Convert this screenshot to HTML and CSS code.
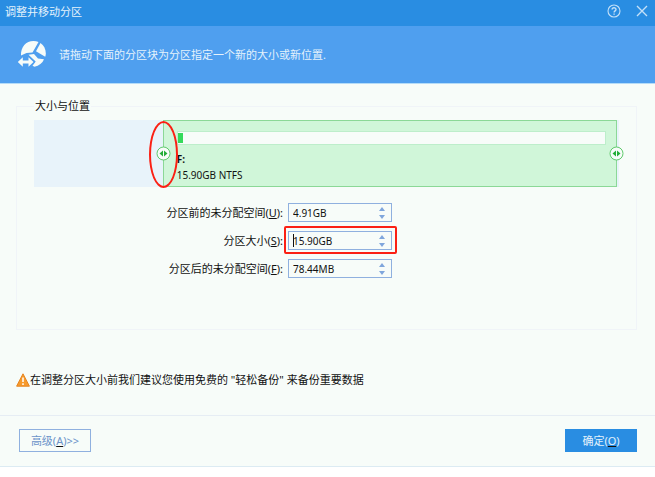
FILE: index.html
```html
<!DOCTYPE html>
<html lang="zh-CN">
<head>
    <meta charset="UTF-8">
    <meta name="viewport" content="width=device-width, initial-scale=1.0">
    <title>调整并移动分区</title>
    <link rel="stylesheet" href="styles.css">
</head>
<body>

    <div class="window">
        <div class="titlebar">
            <div class="title">调整并移动分区</div>
            <button type="button" class="title-btn" aria-label="帮助">
                <svg width="14" height="14" viewBox="0 0 14 14" fill="none" stroke="#c4e0f8">
                    <circle cx="7" cy="7" r="6" stroke-width="1.1"/>
                    <path d="M5.1 5.6c0-2.4 3.9-2.4 3.9-.1 0 1.3-1.9 1.4-1.9 2.9M7.1 9.4v1.3" stroke-width="1.4"/>
                </svg>
            </button>
            <button type="button" class="title-btn" aria-label="关闭">
                <svg width="14" height="14" viewBox="0 0 14 14" fill="none" stroke="#c4e0f8" stroke-width="1.4">
                    <path d="M2 2l10 10M12 2L2 12"/>
                </svg>
            </button>
        </div>

        <div class="banner">
            <svg class="banner-icon" width="30" height="30" viewBox="0 0 30 30" fill="#f7fcf9">
                <path d="M4 15.500C3.600 7 9 1 16.500 1c1.800 0 3.500.3 5 .9L15.500 12.500 9.500 13z"/>
                <path d="M23.500 3c3.200 2.200 5.300 6 5.300 10.200 0 1.300-.2 2.500-.6 3.600L19 11.300z"/>
                <path d="M11.500 14.800L17 14l4 4.500 6 .8c-1.500 3.800-5 6.600-9.500 7.500l-2-1 3.200-4.300-2.700-2.500z"/>
                <path d="M.8 22l5-4.800v3.300h5.700v-3.300l5 4.800-5 4.800v-3.300H5.800v3.300z" stroke="#4f9fef" stroke-width="2" paint-order="stroke"/>
            </svg>
            <div class="banner-text">请拖动下面的分区块为分区指定一个新的大小或新位置.</div>
        </div>

        <div class="content">
            <fieldset class="group">
                <legend>大小与位置</legend>

                <div class="disk">
                    <div class="unallocated"></div>
                    <div class="partition">
                        <div class="usage"><div class="used"></div></div>
                        <div class="drive">F:</div>
                        <div class="drive-size">15.90GB NTFS</div>
                        <svg class="handle handle-left" width="15" height="15" viewBox="0 0 15 15">
                            <circle cx="7.500" cy="7.500" r="6.500" fill="#f7fcf9" stroke="#5fca6c"/>
                            <path d="M7 4.500v6L3.500 7.500zM8 4.500v6l3.500-3z" fill="#22ad37"/>
                        </svg>
                        <svg class="handle handle-right" width="15" height="15" viewBox="0 0 15 15">
                            <circle cx="7.500" cy="7.500" r="6.500" fill="#f7fcf9" stroke="#5fca6c"/>
                            <path d="M7 4.500v6L3.500 7.500zM8 4.500v6l3.500-3z" fill="#22ad37"/>
                        </svg>
                        <div class="mark-ellipse"></div>
                    </div>
                    <div class="tail"></div>
                </div>

                <div class="fields">
                    <label for="before">分区前的未分配空间(<u>U</u>):</label>
                    <div class="spin">
                        <input type="text" id="before" value="4.91GB">
                        <div class="arrows">
                            <button type="button" class="up" aria-label="增加"></button>
                            <button type="button" class="down" aria-label="减少"></button>
                        </div>
                    </div>

                    <label for="size">分区大小(<u>S</u>):</label>
                    <div class="spin">
                        <input type="text" id="size" value="15.90GB">
                        <div class="arrows">
                            <button type="button" class="up" aria-label="增加"></button>
                            <button type="button" class="down" aria-label="减少"></button>
                        </div>
                        <div class="caret"></div>
                        <div class="mark-box"></div>
                    </div>

                    <label for="after">分区后的未分配空间(<u>F</u>):</label>
                    <div class="spin">
                        <input type="text" id="after" value="78.44MB">
                        <div class="arrows">
                            <button type="button" class="up" aria-label="增加"></button>
                            <button type="button" class="down" aria-label="减少"></button>
                        </div>
                    </div>
                </div>
            </fieldset>

            <div class="notice">
                <svg width="14" height="14" viewBox="0 0 14 14">
                    <path d="M7 .8L13.400 13.200H.6z" fill="#f79a2c" stroke="#e58420" stroke-linejoin="round"/>
                    <path d="M7 4.500v4.500M7 10.300v1.700" stroke="#fff" stroke-width="1.500"/>
                </svg>
                <span>在调整分区大小前我们建议您使用免费的 "轻松备份" 来备份重要数据</span>
            </div>
        </div>

        <div class="footer">
            <button type="button" class="btn">高级(<u>A</u>)&gt;&gt;</button>
            <button type="button" class="btn btn-primary">确定(<u>O</u>)</button>
        </div>
    </div>

</body>
</html>
```

FILE: styles.css
```css
* {
    box-sizing: border-box;
}
body {
    margin: 0;
    background-color: #fff;
    color: #111;
    font-family: "Noto Sans", "Noto Sans CJK SC", sans-serif;
    font-size: 11px;
    line-height: 16px;
}
button,
input {
    font: inherit;
    color: inherit;
    margin: 0;
    padding: 0;
    border: none;
    background: none;
}
svg {
    display: block;
}
.window {
    background-color: #f7fcf9;
    border-bottom: 1px solid #dcebf3;
}
.titlebar {
    display: flex;
    align-items: center;
    gap: 14px;
    height: 26px;
    padding: 0 6px 4px 5px;
    background-color: #298de2;
    color: #e4f2fc;
}
.title {
    flex: 1;
    padding-top: 2px;
}
.title-btn {
    cursor: pointer;
}
.banner {
    display: flex;
    align-items: center;
    gap: 12px;
    height: 58px;
    padding: 0 17px;
    background-color: #4f9fef;
    border-bottom: 1px solid #b5dcf8;
    color: #e4f2fc;
}
.content {
    padding: 14px 18px 27px 16px;
}
.group {
    margin: 0;
    padding: 6px 17px 51px 17px;
    border: 1px solid #f0f4f8;
}
.group legend {
    padding: 0 1px;
}
.disk {
    display: flex;
    height: 67px;
    background-color: #e8f3fa;
}
.unallocated {
    width: 22%;
}
.tail {
    width: 2px;
}
.partition {
    position: relative;
    flex: 1;
    padding: 10px 10px 0 13px;
    background-color: #d0f6d9;
    border: 1px solid #8bd897;
    font-size: 10px;
}
.usage {
    height: 14px;
    margin-bottom: 6px;
    border: 1px solid #bdeecb;
    background-color: #f7fcf9;
}
.used {
    width: 5px;
    height: 10px;
    margin-top: 1px;
    background-color: #34da5b;
}
.drive {
    font-weight: bold;
}
.handle {
    position: absolute;
    top: 25px;
}
.handle-left {
    left: -8px;
}
.handle-right {
    right: -8px;
}
.mark-ellipse {
    position: absolute;
    top: 0;
    left: -15px;
    width: 29px;
    height: 67px;
    border: 2px solid #fb2014;
    border-radius: 50%;
}
.fields {
    display: grid;
    grid-template-columns: 249px 104px;
    column-gap: 5px;
    row-gap: 9px;
    align-items: center;
    margin-top: 16px;
}
.fields label {
    text-align: right;
}
.spin {
    position: relative;
    display: flex;
    height: 19px;
    border: 1px solid #8fb0df;
    font-size: 10px;
}
.spin input {
    flex: 1;
    min-width: 0;
    padding-left: 4px;
    outline: none;
}
.arrows {
    display: flex;
    flex-direction: column;
    justify-content: center;
    gap: 4px;
    padding-right: 6px;
}
.up,
.down {
    width: 0;
    height: 0;
    border-left: 3px solid transparent;
    border-right: 3px solid transparent;
}
.up {
    border-bottom: 4px solid #7fa6dc;
}
.down {
    border-top: 4px solid #7fa6dc;
}
.caret {
    position: absolute;
    top: 2px;
    left: 4px;
    width: 1px;
    height: 13px;
    background-color: #111;
}
.mark-box {
    position: absolute;
    inset: -6px -6px -5px -5px;
    border: 2px solid #fb2014;
    border-radius: 2px;
    pointer-events: none;
}
.notice {
    display: flex;
    align-items: center;
    margin-top: 42px;
}
.footer {
    display: flex;
    justify-content: space-between;
    padding: 13px 18px 14px 19px;
    border-top: 1px solid #e6edf4;
}
.btn {
    width: 72px;
    height: 23px;
    border: 1px solid #8fb0df;
    color: #6b93c9;
    cursor: pointer;
}
.btn-primary {
    border-color: #298de2;
    background-color: #298de2;
    color: #e4f2fc;
}
.btn u {
    text-decoration-color: #111;
}
```
